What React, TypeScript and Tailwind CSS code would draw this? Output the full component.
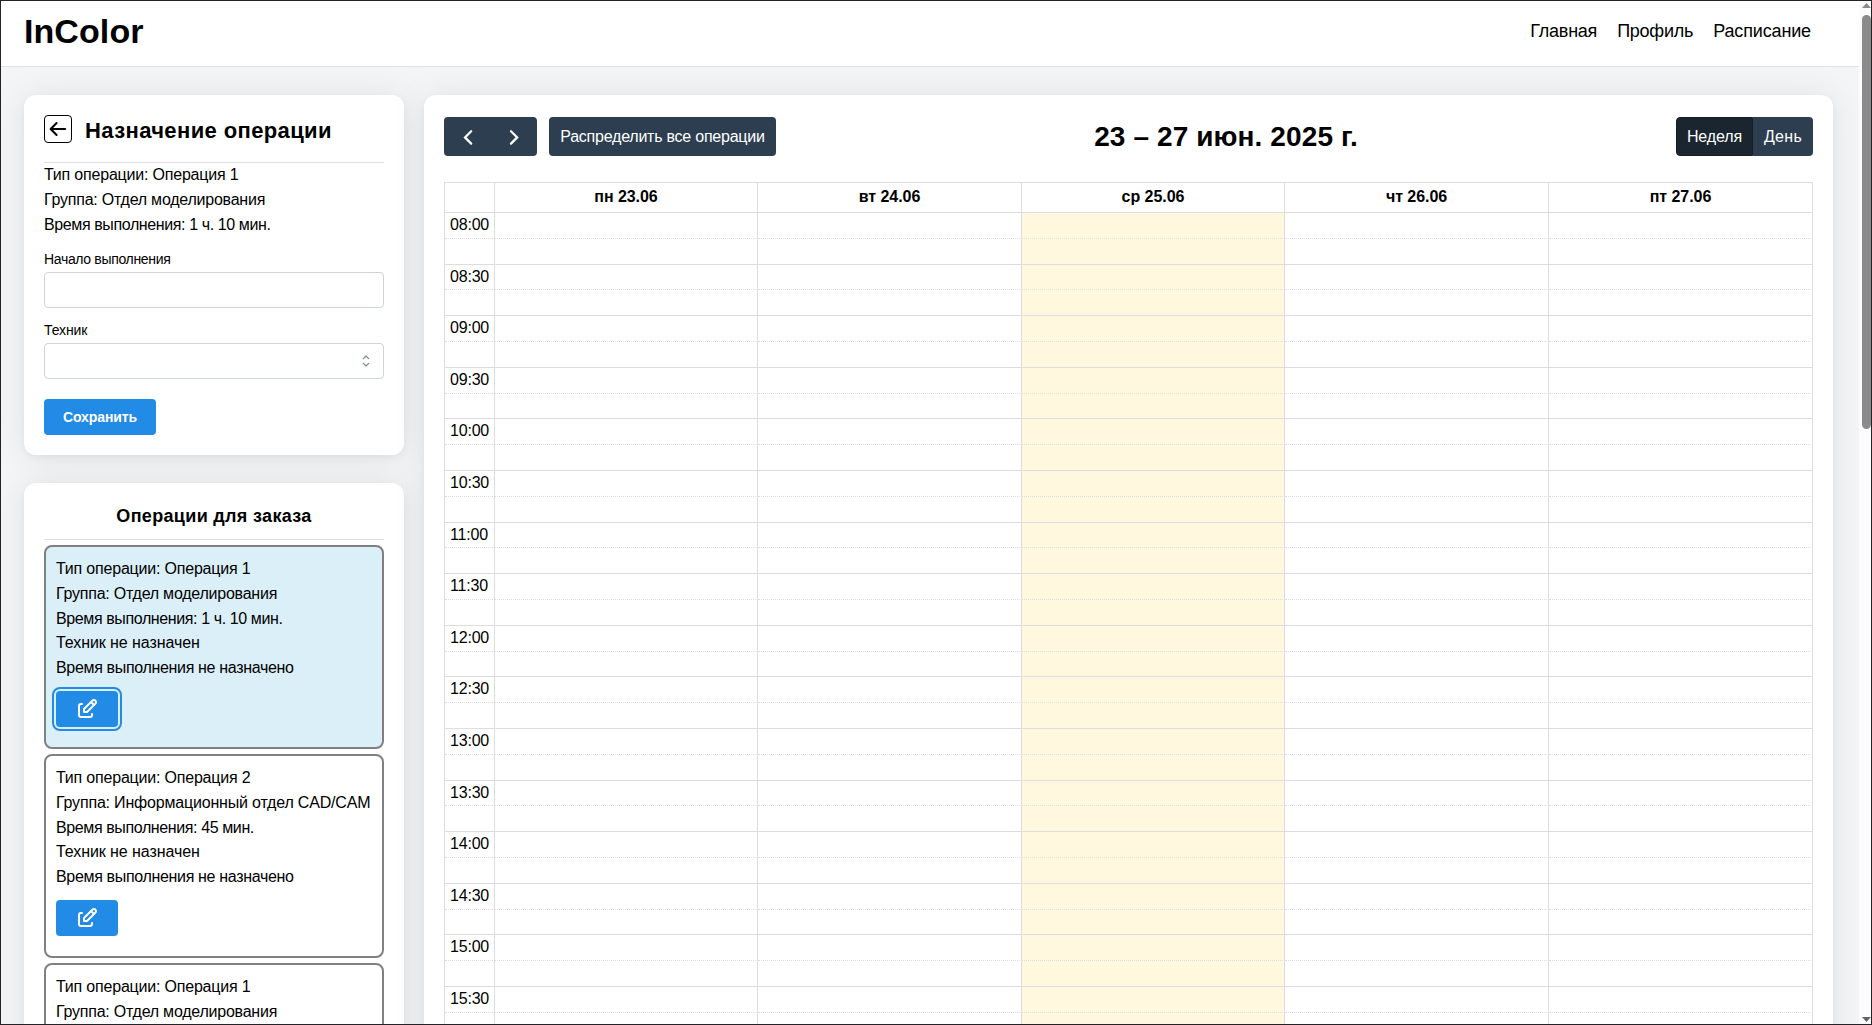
import React from "react";

const CARD =
  "bg-white shadow-[0_3px_8px_rgba(0,0,0,0.05),0_0_36px_rgba(0,0,0,0.08)]";

function EditIcon() {
  return (
    <svg width="24" height="24" viewBox="0 0 24 24" fill="none" stroke="currentColor" strokeWidth="2" strokeLinecap="round" strokeLinejoin="round">
      <path d="M7 7h-1a2 2 0 0 0 -2 2v9a2 2 0 0 0 2 2h9a2 2 0 0 0 2 -2v-1" />
      <path d="M20.385 6.585a2.1 2.1 0 0 0 -2.97 -2.97l-8.415 8.385v3h3l8.385 -8.415z" />
      <path d="M16 5l3 3" />
    </svg>
  );
}

type Line = { text: string; track: string };

const TYPE_1: Line = { text: "Тип операции: Операция 1", track: "tracking-[-0.2px]" };
const TYPE_2: Line = { text: "Тип операции: Операция 2", track: "tracking-[-0.2px]" };
const GROUP_MODEL: Line = { text: "Группа: Отдел моделирования", track: "tracking-[-0.23px]" };
const GROUP_CAD: Line = { text: "Группа: Информационный отдел CAD/CAM", track: "tracking-[-0.185px]" };
const TIME_70: Line = { text: "Время выполнения: 1 ч. 10 мин.", track: "tracking-[-0.39px]" };
const TIME_45: Line = { text: "Время выполнения: 45 мин.", track: "tracking-[-0.39px]" };
const NO_TECH: Line = { text: "Техник не назначен", track: "tracking-[-0.078px]" };
const NO_TIME: Line = { text: "Время выполнения не назначено", track: "tracking-[-0.331px]" };

const OPERATIONS = [
  { lines: [TYPE_1, GROUP_MODEL, TIME_70, NO_TECH, NO_TIME], active: true },
  { lines: [TYPE_2, GROUP_CAD, TIME_45, NO_TECH, NO_TIME], active: false },
  { lines: [TYPE_1, GROUP_MODEL, TIME_70, NO_TECH, NO_TIME], active: false },
];

function Lines({ items }: { items: Line[] }) {
  return (
    <>
      {items.map((l) => (
        <p key={l.text} className={`whitespace-nowrap text-[16px] leading-[24.8px] ${l.track}`}>
          {l.text}
        </p>
      ))}
    </>
  );
}

function AssignCard() {
  return (
    <section className={`h-[360px] rounded-xl p-5 ${CARD}`}>
      <div className="flex h-12 items-start border-b border-[#dee2e6]">
        <button className="flex size-7 items-center justify-center rounded border border-black">
          <svg width="18" height="16" viewBox="0 0 18 16" fill="none" stroke="black" strokeWidth="2" strokeLinecap="round" strokeLinejoin="round">
            <path d="M16.2 8H1.8M7.6 2L1.6 8l6 6" />
          </svg>
        </button>
        <h2 className="ml-3 mt-px whitespace-nowrap pl-px text-[22px] font-bold leading-[30px] tracking-[0.38px]">
          Назначение операции
        </h2>
      </div>
      <Lines items={[TYPE_1, GROUP_MODEL, TIME_70]} />
      <div className="pt-[11.6px]">
        <label className="block h-[23px] text-[14px] leading-[20.6px] tracking-[-0.33px]">Начало выполнения</label>
        <div className="h-9 rounded border border-[#ced4da] bg-white" />
      </div>
      <div className="pt-3">
        <label className="block h-[23px] text-[14px] leading-[20.6px] tracking-[-0.1px]">Техник</label>
        <div className="flex h-9 items-center justify-end rounded border border-[#ced4da] bg-white pr-[13px]">
          <svg width="8" height="12" viewBox="0 0 8 12" fill="none" stroke="#868e96" strokeWidth="1.2" strokeLinecap="round" strokeLinejoin="round">
            <path d="M1.2 3.7L4 1l2.8 2.7M1.2 8.3L4 11l2.8-2.7" />
          </svg>
        </div>
      </div>
      <button className="mt-5 flex h-9 w-28 items-center justify-center rounded bg-[#228be6] pt-px text-[14px] font-bold tracking-[-0.1px] text-white">
        Сохранить
      </button>
    </section>
  );
}

function OperationsCard() {
  return (
    <section className={`rounded-xl p-5 ${CARD}`}>
      <h3 className="h-[37px] border-b border-[#dee2e6] text-center text-[18px] font-bold leading-[26px] tracking-[0.33px]">
        Операции для заказа
      </h3>
      <div className="flex flex-col gap-[5px] pt-[5px]">
        {OPERATIONS.map((op, i) => (
          <div
            key={i}
            className={`h-[204px] shrink-0 rounded-lg border-2 border-[#808080] p-2.5 ${op.active ? "bg-[#dbeff9]" : "bg-white"}`}
          >
            <Lines items={op.lines} />
            <button
              className={`mt-2.5 flex h-9 w-[62px] items-center justify-center rounded bg-[#228be6] text-white ${op.active ? "outline-2 outline-offset-2 outline-[#228be6]" : ""}`}
            >
              <EditIcon />
            </button>
          </div>
        ))}
      </div>
    </section>
  );
}

const DAYS = ["пн 23.06", "вт 24.06", "ср 25.06", "чт 26.06", "пт 27.06"];
const SLOTS = Array.from({ length: 34 }, (_, i) => {
  const half = Math.floor(i / 2);
  const hour = String(8 + Math.floor(half / 2)).padStart(2, "0");
  return i % 2 === 0 ? `${hour}:${half % 2 === 0 ? "00" : "30"}` : "";
});
const COLS = "grid grid-cols-[50px_263px_264px_263px_264px_264px]";

function Calendar() {
  return (
    <section className={`h-[1100px] w-[1409px] rounded-xl px-5 pt-[22px] ${CARD}`}>
      <div className="flex h-[39px] items-center justify-between text-white">
        <div className="flex gap-3">
          <div className="flex h-[39px] w-[93px] items-center justify-between rounded bg-[#2c3e50] pl-[17.5px] pr-[17.5px]">
            <svg width="12" height="16" viewBox="0 0 12 16" fill="none" stroke="currentColor" strokeWidth="2.2" strokeLinecap="round">
              <path d="M9.2 2.2L3 8.4l6.2 6.2" />
            </svg>
            <svg width="12" height="16" viewBox="0 0 12 16" fill="none" stroke="currentColor" strokeWidth="2.2" strokeLinecap="round">
              <path d="M3 2.2l6.2 6.2-6.2 6.2" />
            </svg>
          </div>
          <button className="flex h-[39px] w-[227px] items-center justify-center whitespace-nowrap rounded bg-[#2c3e50] text-[16px] tracking-[-0.23px]">
            Распределить все операции
          </button>
        </div>
        <h2 className="whitespace-nowrap text-[28px] font-bold leading-[39px] tracking-[0.11px] text-black">
          23 – 27 июн. 2025 г.
        </h2>
        <div className="flex text-[16px]">
          <button className="h-[39px] w-[77px] rounded-l border border-[#151e27] bg-[#1a252f] tracking-[-0.1px]">Неделя</button>
          <button className="h-[39px] w-[60px] rounded-r bg-[#2c3e50] tracking-[0.3px]">День</button>
        </div>
      </div>
      <div className="mt-[26px] border-l border-[#ddd]">
        <div className={`${COLS} h-[30px] border-t border-[#ddd] text-center text-[16px] font-bold leading-[28px] tracking-[-0.05px]`}>
          <div className="border-r border-[#ddd]" />
          {DAYS.map((d) => (
            <div key={d} className="border-r border-[#ddd]">{d}</div>
          ))}
        </div>
        {SLOTS.map((t, i) => (
          <div key={i} className={`${COLS} h-[25.8px]`}>
            {["time", ...DAYS].map((d, c) => (
              <div
                key={d}
                className={`border-r border-t border-[#ddd] ${t ? "" : "[border-top-style:dotted]"} ${c === 3 ? "bg-[#fff8df]" : ""} ${c === 0 ? "pl-[5px] text-[16px] leading-[24.8px] tracking-[-0.2px]" : ""}`}
              >
                {c === 0 ? t : null}
              </div>
            ))}
          </div>
        ))}
      </div>
    </section>
  );
}

function Scrollbar() {
  return (
    <div className="flex w-3 shrink-0 flex-col items-end bg-[#fcfcfc]">
      <svg width="9" height="14" viewBox="0 0 9 14"><path d="M0 7L4.5 2L9 7z" fill="#8b8b8b" /></svg>
      <div className="h-[414px] w-[9px] rounded-full bg-[#8b8b8b]" />
      <div className="flex-1" />
      <svg width="9" height="9" viewBox="0 0 9 9"><path d="M0 2h9L4.5 7z" fill="#636363" /></svg>
    </div>
  );
}

export default function App() {
  return (
    <div className="flex h-[1025px] w-[1872px] overflow-hidden border border-[#242226] bg-[#f3f5f7] font-['Liberation_Sans',Arial,sans-serif] text-black">
      <div className="flex min-w-0 flex-1 flex-col overflow-hidden">
        <header className="flex h-[66px] shrink-0 items-start justify-between border-b border-[#dee2e6] bg-white pl-[23px] pr-[48px]">
          <h1 className="pt-[10px] text-[34px] font-bold leading-[40px] tracking-[0.08px]">InColor</h1>
          <nav className="flex gap-5 pt-[17px] text-[18px] leading-[26px]">
            <a className="tracking-[-0.25px]">Главная</a>
            <a className="tracking-[-0.24px]">Профиль</a>
            <a className="tracking-[-0.14px]">Расписание</a>
          </nav>
        </header>
        <main className="flex min-h-0 flex-1 items-start gap-5 overflow-hidden pl-[23px] pt-7">
          <div className="flex w-[380px] shrink-0 flex-col gap-7">
            <AssignCard />
            <OperationsCard />
          </div>
          <Calendar />
        </main>
      </div>
      <Scrollbar />
    </div>
  );
}
